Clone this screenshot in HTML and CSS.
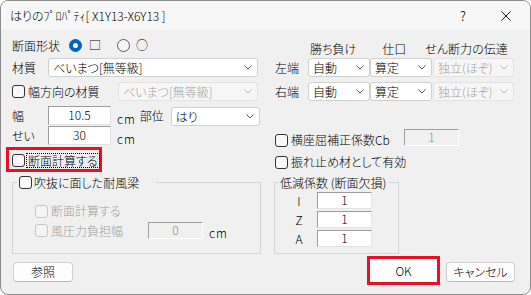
FILE: index.html
```html
<!DOCTYPE html>
<html lang="ja">
<head>
    <meta charset="UTF-8">
    <meta name="viewport" content="width=device-width, initial-scale=1.0">
    <title>はりのプロパティ</title>
    <link rel="stylesheet" href="styles.css">
</head>
<body>
    <div class="dialog">
        <div class="titlebar">
            <span class="title">はりのﾌﾟﾛﾊﾟﾃｨ[ X1Y13-X6Y13 ]</span>
            <span class="help">?</span>
            <svg class="close" width="10" height="10" viewBox="0 0 10 10">
                <path d="M0.5 0.5 L9.5 9.5 M9.5 0.5 L0.5 9.5" stroke="#1a1a1a" stroke-width="1" fill="none"/>
            </svg>
        </div>

        <div class="content">
            <!-- 左側 -->
            <div class="col-left">
                <div class="row r-shape">
                    <span class="lbl w57">断面形状</span>
                    <span class="radio on"></span><span class="shape s1">□</span>
                    <span class="radio r2"></span><span class="shape s2">○</span>
                </div>
                <div class="row r-mat">
                    <span class="lbl w36">材質</span>
                    <div class="combo w210">
                        <span>べいまつ[無等級]</span>
                        <svg class="chev" width="8" height="5" viewBox="0 0 8 5"><polyline points="0.5,0.5 4,4 7.5,0.5" fill="none" stroke="currentColor"/></svg>
                    </div>
                </div>
                <div class="row r-wmat">
                    <label class="chk-item w106"><span class="check"></span><span class="chk-text">幅方向の材質</span></label>
                    <div class="combo disabled w140">
                        <span>べいまつ[無等級]</span>
                        <svg class="chev" width="8" height="5" viewBox="0 0 8 5"><polyline points="0.5,0.5 4,4 7.5,0.5" fill="none" stroke="currentColor"/></svg>
                    </div>
                </div>
                <div class="row r-width">
                    <span class="lbl w36">幅</span>
                    <div class="num w63">10.5</div>
                    <span class="unit">cm</span>
                    <span class="lbl part">部位</span>
                    <div class="combo w89 part-combo">
                        <span>はり</span>
                        <svg class="chev" width="8" height="5" viewBox="0 0 8 5"><polyline points="0.5,0.5 4,4 7.5,0.5" fill="none" stroke="currentColor"/></svg>
                    </div>
                </div>
                <div class="row r-height">
                    <span class="lbl w36">せい</span>
                    <div class="num w63">30</div>
                    <span class="unit">cm</span>
                </div>
                <div class="mark-box">
                    <span class="check"></span><span class="focus-text">断面計算する</span>
                </div>

                <fieldset class="group g-left">
                    <legend class="lg-left"><span class="check"></span><span class="chk-text">吹抜に面した耐風梁</span></legend>
                    <div class="grow g1">
                        <span class="check disabled"></span><span class="chk-text gray">断面計算する</span>
                    </div>
                    <div class="grow g2">
                        <label class="chk-item w113"><span class="check disabled"></span><span class="chk-text gray">風圧力負担幅</span></label>
                        <div class="num off w55">0</div>
                        <span class="unit">cm</span>
                    </div>
                </fieldset>
            </div>

            <!-- 右側 -->
            <div class="col-right">
                <div class="hdr">
                    <span class="h1">勝ち負け</span>
                    <span class="h2">仕口</span>
                    <span class="h3">せん断力の伝達</span>
                </div>
                <div class="row r-end">
                    <span class="lbl end">左端</span>
                    <div class="combo w62"><span>自動</span><svg class="chev" width="8" height="5" viewBox="0 0 8 5"><polyline points="0.5,0.5 4,4 7.5,0.5" fill="none" stroke="currentColor"/></svg></div>
                    <div class="combo w62"><span>算定</span><svg class="chev" width="8" height="5" viewBox="0 0 8 5"><polyline points="0.5,0.5 4,4 7.5,0.5" fill="none" stroke="currentColor"/></svg></div>
                    <div class="combo disabled w81 gap1"><span>独立(ほぞ)</span><svg class="chev" width="8" height="5" viewBox="0 0 8 5"><polyline points="0.5,0.5 4,4 7.5,0.5" fill="none" stroke="currentColor"/></svg></div>
                </div>
                <div class="row r-end2">
                    <span class="lbl end">右端</span>
                    <div class="combo w62"><span>自動</span><svg class="chev" width="8" height="5" viewBox="0 0 8 5"><polyline points="0.5,0.5 4,4 7.5,0.5" fill="none" stroke="currentColor"/></svg></div>
                    <div class="combo w62"><span>算定</span><svg class="chev" width="8" height="5" viewBox="0 0 8 5"><polyline points="0.5,0.5 4,4 7.5,0.5" fill="none" stroke="currentColor"/></svg></div>
                    <div class="combo disabled w81 gap1"><span>独立(ほぞ)</span><svg class="chev" width="8" height="5" viewBox="0 0 8 5"><polyline points="0.5,0.5 4,4 7.5,0.5" fill="none" stroke="currentColor"/></svg></div>
                </div>
                <div class="row r-cb">
                    <label class="chk-item w129"><span class="check"></span><span class="chk-text">横座屈補正係数Cb</span></label>
                    <div class="num off w55">1</div>
                </div>
                <div class="row r-brace">
                    <label class="chk-item"><span class="check"></span><span class="chk-text">振れ止め材として有効</span></label>
                </div>

                <fieldset class="group g-right">
                    <legend class="lg-right">低減係数 (断面欠損)</legend>
                    <div class="krow k1"><span class="klbl">I</span><div class="num w55">1</div></div>
                    <div class="krow"><span class="klbl">Z</span><div class="num w55">1</div></div>
                    <div class="krow"><span class="klbl">A</span><div class="num w55">1</div></div>
                </fieldset>
            </div>
        </div>

        <div class="footer">
            <button class="btn ref">参照</button>
            <button class="btn ok">OK</button>
            <button class="btn cancel">キャンセル</button>
        </div>
    </div>
</body>
</html>
```

FILE: styles.css
```css
* {
    box-sizing: border-box;
}

body {
    margin: 0;
    background-color: #ffffff;
    font-family: "Noto Sans CJK JP", "Liberation Sans", sans-serif;
    font-size: 12px;
    font-weight: 300;
    color: #000;
    font-feature-settings: "palt";
}

.dialog {
    width: 531px;
    height: 295px;
    border: 1px solid #8c8c8c;
    border-radius: 8px;
    background-color: #f0f0f0;
    overflow: hidden;
    display: flex;
    flex-direction: column;
}

/* タイトルバー */
.titlebar {
    height: 29px;
    flex: none;
    display: flex;
    align-items: center;
    padding: 1px 19px 0 9px;
    background-color: #f7f7f7;
}

.title {
    flex: 1;
    line-height: 14px;
}

.help {
    width: 6px;
    font-size: 13px;
    line-height: 14px;
    margin-right: 35px;
}

.close {
    display: block;
}

/* 本体 */
.content {
    height: 224px;
    flex: none;
    display: flex;
    padding-left: 11px;
}

.col-left {
    width: 249px;
    display: flex;
    flex-direction: column;
}

.col-right {
    margin-left: 13px;
    width: 250px;
    display: flex;
    flex-direction: column;
}

.row {
    display: flex;
    align-items: center;
    height: 19px;
    flex: none;
}

.lbl {
    line-height: 19px;
    white-space: nowrap;
}

.w36 { width: 36px; }
.w57 { width: 57px; }

.r-shape {
    margin-top: 7px;
    height: 16px;
}

.radio {
    width: 13px;
    height: 13px;
    border-radius: 50%;
    border: 1px solid #5c5c5c;
    background-color: #f6f6f6;
    display: flex;
    align-items: center;
    justify-content: center;
    flex: none;
}

.radio.on {
    background-color: #0067c0;
    border-color: #0067c0;
}

.radio.on::after {
    content: "";
    width: 5px;
    height: 5px;
    border-radius: 50%;
    background-color: #fff;
}

.shape {
    line-height: 16px;
}

.s1 { margin-left: 7px; }
.r2 { margin-left: 16px; }
.s2 { margin-left: 6px; }

.r-mat { margin-top: 5px; }
.r-wmat { margin-top: 5px; }

.r-width {
    margin-top: 5px;
    align-items: flex-start;
}

.r-height {
    margin-top: 1px;
    align-items: flex-start;
}

/* コンボボックス */
.combo {
    height: 19px;
    display: flex;
    align-items: center;
    justify-content: space-between;
    padding: 0 5px 0 4px;
    background-color: #ffffff;
    border: 1px solid #d0d0d0;
    border-radius: 3px;
    line-height: 17px;
    white-space: nowrap;
    color: #000;
    flex: none;
}

.combo .chev {
    color: #5f5f5f;
    flex: none;
}

.combo.disabled {
    background-color: #f6f6f6;
    border-color: #e3e3e3;
    color: #a3a3a3;
}

.combo.disabled .chev {
    color: #bdbdbd;
}

.w210 { width: 210px; }
.w140 { width: 140px; }
.w89 { width: 89px; }
.w62 { width: 62px; }
.w81 { width: 81px; }
.gap1 { margin-left: 1px; }

.part {
    margin-left: 4px;
    width: 31px;
}

.part-combo {
    margin-top: 1px;
}

/* チェックボックス */
.chk-item {
    display: flex;
    align-items: center;
    flex: none;
}

.w106 { width: 106px; }
.w113 { width: 113px; }
.w129 { width: 129px; }

.check {
    width: 13px;
    height: 13px;
    border: 1px solid #333;
    border-radius: 3px;
    background-color: #f8f8f8;
    flex: none;
}

.check.disabled {
    border-color: #c9c9c9;
    background-color: #f4f4f4;
}

.chk-text {
    margin-left: 3px;
    line-height: 14px;
    white-space: nowrap;
}

.gray {
    color: #a0a0a0;
}

/* 数値入力 */
.num {
    height: 19px;
    background-color: #ffffff;
    border: 1px solid;
    border-color: #9c9c9c #e4e4e4 #e4e4e4 #9c9c9c;
    text-align: center;
    line-height: 14px;
    padding-top: 1px;
    flex: none;
}

.num.off {
    height: 17px;
    background-color: #f0f0f0;
    border-color: #a0a0a0 #ffffff #ffffff #a0a0a0;
    color: #8a8a8a;
    line-height: 13px;
    padding-top: 0;
}

.w63 { width: 63px; }
.w55 { width: 55px; }

.unit {
    margin-left: 6px;
    letter-spacing: 1px;
    line-height: 13px;
    align-self: flex-end;
    font-size: 12px;
}

/* 赤枠 */
.mark-box {
    margin-top: 2px;
    margin-left: -6px;
    width: 96px;
    height: 25px;
    border: 3px solid #e81123;
    display: flex;
    align-items: center;
    padding: 1px 0 0 3px;
    flex: none;
}

.focus-text {
    margin-left: 2px;
    padding: 0 1px;
    line-height: 13px;
    outline: 1px dotted #000;
    white-space: nowrap;
}

/* グループ */
.group {
    margin: 0;
    padding: 0;
    border: 1px solid #d6d6d6;
    height: 78px;
    flex: none;
    min-width: 0;
}

.g-left {
    margin-top: 4px;
    width: 249px;
}

.lg-left {
    margin-left: 4px;
    padding: 0 17px 0 2px;
    display: flex;
    align-items: center;
    height: 13px;
}

.lg-left .chk-text {
    margin-left: 2px;
    line-height: 13px;
}

.grow {
    display: flex;
    align-items: center;
    padding-left: 22px;
}

.g1 {
    margin-top: 15px;
    height: 14px;
}

.g2 {
    margin-top: 4px;
    height: 17px;
}

.g2 .unit {
    margin-top: 3px;
}

/* 右側 */
.hdr {
    margin-top: 11px;
    height: 15px;
    line-height: 15px;
    display: flex;
    white-space: nowrap;
    flex: none;
}

.h1 { margin-left: 36px; }
.h2 { margin-left: 26px; }
.h3 { margin-left: 19px; }

.r-end { margin-top: 2px; }
.r-end2 { margin-top: 5px; }

.end {
    width: 34px;
    padding-left: 1px;
}

.r-cb {
    margin-top: 28px;
    height: 18px;
    align-items: flex-end;
    padding-left: 1px;
}

.r-cb .num {
    align-self: flex-start;
}

.r-brace {
    margin-top: 8px;
    height: 14px;
    padding-left: 1px;
}

.g-right {
    margin-top: 7px;
    width: 125px;
}

.lg-right {
    margin-left: 4px;
    padding: 0 2px 0 1px;
    line-height: 13px;
    height: 13px;
    white-space: nowrap;
}

.krow {
    display: flex;
    height: 17px;
    margin-top: 2px;
    padding-left: 6px;
}

.krow.k1 {
    margin-top: 3px;
}

.krow .num {
    height: 17px;
    line-height: 13px;
    padding-top: 0;
}

.klbl {
    width: 36px;
    text-align: center;
    line-height: 17px;
}

/* ボタン */
.footer {
    flex: 1;
    display: flex;
    align-items: flex-start;
    padding: 0 15px 0 12px;
}

.btn {
    font-family: inherit;
    font-size: 12px;
    font-weight: 300;
    font-feature-settings: "palt";
    color: #000;
    background-color: #fdfdfd;
    border: 1px solid #d0d0d0;
    border-bottom-color: #b9b9b9;
    border-radius: 4px;
    height: 20px;
    padding: 0;
    line-height: 16px;
    margin-top: 8px;
}

.ref {
    width: 60px;
}

.ok {
    margin-left: auto;
    margin-top: 2px;
    width: 73px;
    height: 29px;
    border: 3px solid #e81123;
    border-radius: 0;
    background-color: #ffffff;
}

.cancel {
    margin-left: 6px;
    width: 69px;
}
```
